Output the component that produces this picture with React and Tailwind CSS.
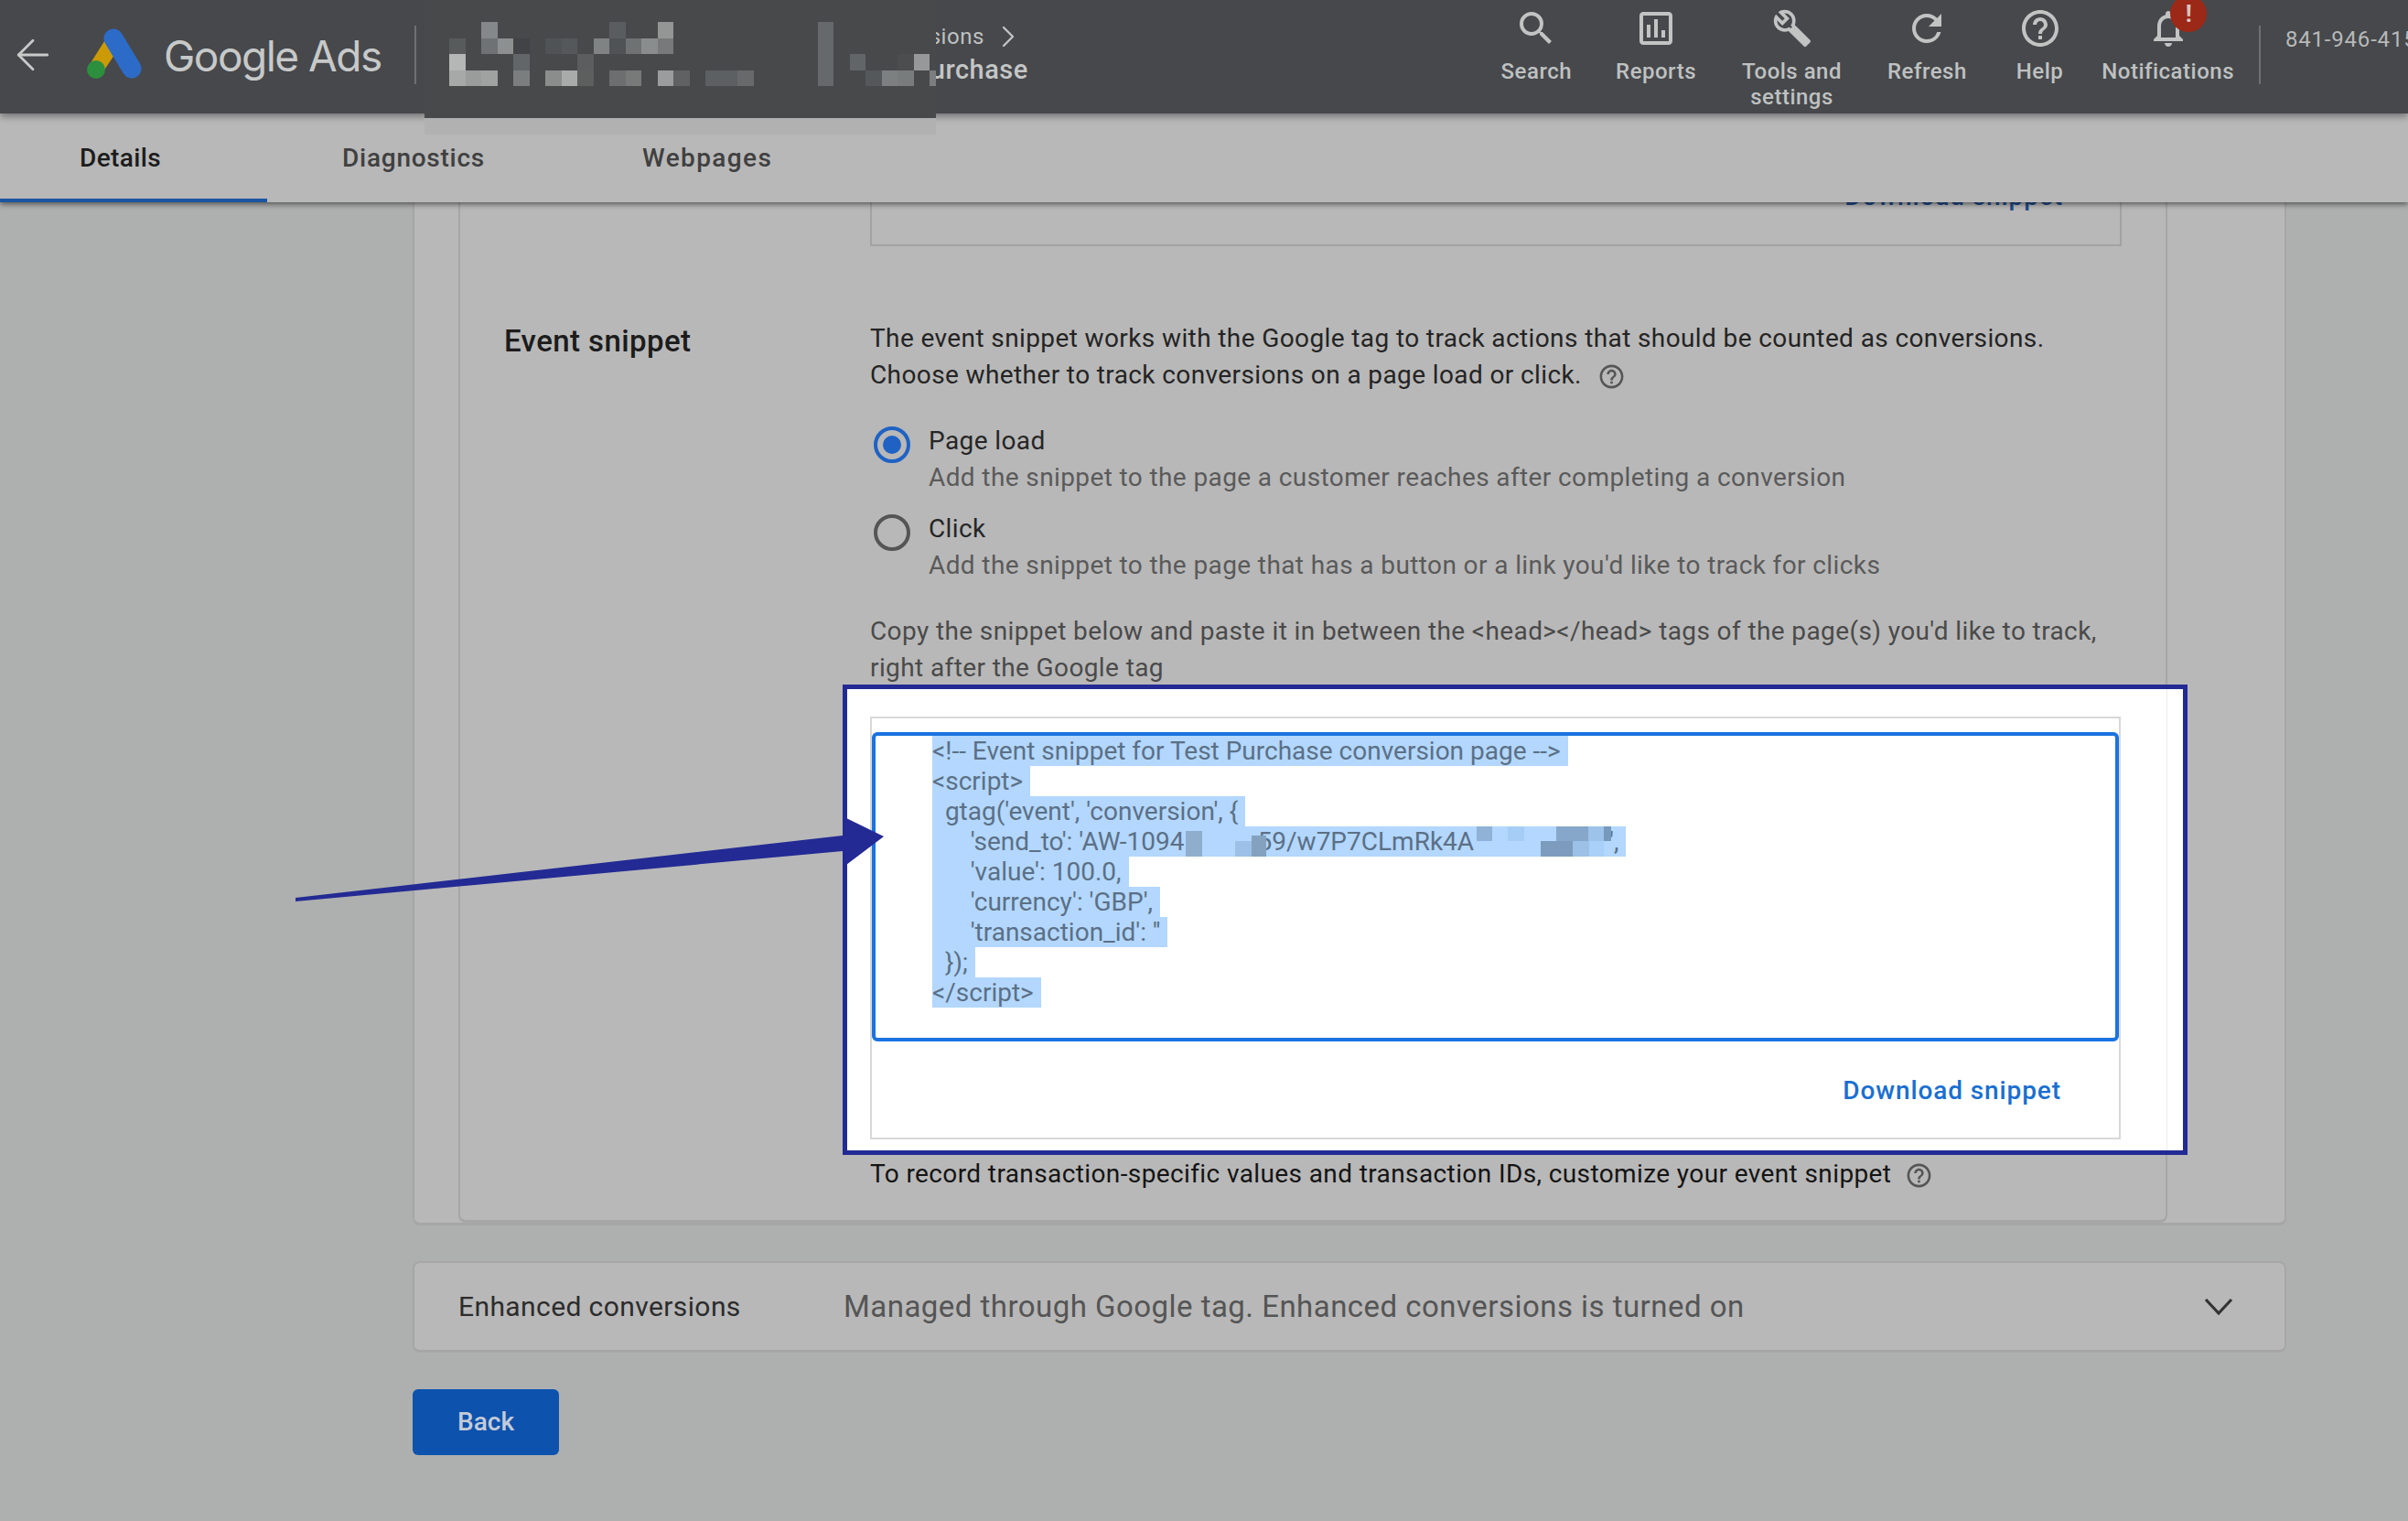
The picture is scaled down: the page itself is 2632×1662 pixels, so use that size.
import React from "react";
import { ArrowLeft, ChevronRight } from "lucide-react";
import { MdSearch, MdOutlineAssessment, MdRefresh, MdHelpOutline, MdNotificationsNone } from "react-icons/md";

const ROWS = [
  { 2: "#85888a", 10: "#5a5d5f", 13: "#939695", 23: "#65696b" },
  { 0: "#585b5c", 2: "#6f7274", 3: "#8d9090", 4: "#414346", 6: "#505355", 7: "#55585a", 9: "#808383", 10: "#505355", 11: "#6f7273", 12: "#8a8d8d", 13: "#77797a", 23: "#65696b" },
  { 0: "#b5b6b6", 4: "#636668", 8: "#5c5d5e", 23: "#65696b", 25: "#626568", 28: "#4b4d4f", 29: "#96989a" },
  { 0: "#a7a9a8", 1: "#9a9c9c", 2: "#a0a2a2", 4: "#7b7e7f", 6: "#8a8d8c", 7: "#a9abaa", 8: "#5d5f5e", 10: "#6c6e6f", 11: "#787a7a", 13: "#9a9c9d", 14: "#5f6163", 16: "#5d6062", 17: "#5d6062", 18: "#68696b", 23: "#65696b", 26: "#55585a", 27: "#7d8081", 28: "#797c7d", 30: "#7b7e7f" },
];

const CELLS = ROWS.flatMap((row, r) => Array.from({ length: 31 }, (_, c) => ({ key: r + "-" + c, color: row[c] || "transparent" })));

const SNIPPET_BLOCKS = [
  { x: 278, y: 5, w: 18, h: 28, c: "#8faecd" },
  { x: 332, y: 16, w: 18, h: 17, c: "#9cc0e6" },
  { x: 350, y: 10, w: 16, h: 23, c: "#84a2c0" },
  { x: 596, y: 0, w: 17, h: 16, c: "#8fb2d6" },
  { x: 630, y: 0, w: 18, h: 16, c: "#a6cdf5" },
  { x: 683, y: 0, w: 35, h: 16, c: "#86a7c9" },
  { x: 718, y: 0, w: 17, h: 16, c: "#9dc3ea" },
  { x: 735, y: 0, w: 8, h: 16, c: "#7799bb" },
  { x: 666, y: 16, w: 35, h: 17, c: "#7d9cbd" },
  { x: 701, y: 16, w: 18, h: 17, c: "#9cc0e6" },
  { x: 719, y: 16, w: 16, h: 17, c: "#a9d0f8" },
];

function NavItem({ icon, label, second, extra, className }) {
  return (
    <div className={"relative flex flex-col items-center pt-[5px] h-[124px] " + className}>
      <div className="h-[52px] w-[48px] flex items-center justify-center text-[#c2c4c4]">{icon}</div>
      <div className="mt-[7px] text-center text-[24px] leading-[28px] font-medium tracking-[0.5px] text-[#bfc1c1] whitespace-nowrap">
        <div>{label}</div>
        {second && <div>{second}</div>}
      </div>
      {extra}
    </div>
  );
}

function WrenchIcon() {
  return (
    <svg width="44" height="44" viewBox="0 0 24 24" fill="currentColor">
      <path d="m22.61 18.99-9.08-9.08c.93-2.34.45-5.1-1.44-7C9.79.61 6.21.4 3.66 2.26L7.5 6.11 6.08 7.52 2.25 3.69C.39 6.23.6 9.82 2.9 12.11c1.86 1.86 4.57 2.35 6.88 1.48l9.11 9.11c.39.39 1.02.39 1.41 0l2.3-2.3c.4-.38.4-1.01.01-1.41zm-3 1.6-9.46-9.46c-.61.45-1.29.72-2 .82-1.36.2-2.79-.21-3.83-1.25C3.37 9.76 2.93 8.5 3 7.26l3.09 3.09 4.24-4.24-3.09-3.09c1.24-.07 2.49.37 3.44 1.31 1.08 1.08 1.49 2.57 1.24 3.96-.12.71-.42 1.37-.88 1.96l9.45 9.45-.88.89z" />
      <path d="M11.5 11.5 20.3 20.5" stroke="currentColor" strokeWidth="3" fill="none" />
    </svg>
  );
}

function AdsLogo() {
  return (
    <svg width="62" height="58" viewBox="93 30 62 58">
      <polygon points="115,42 124,60 112,78 96,72" fill="#cc9a06" />
      <line x1="123" y1="42" x2="143" y2="75" stroke="#2c6cc8" strokeWidth="21" strokeLinecap="round" />
      <circle cx="104" cy="76" r="10" fill="#2c8f3e" />
    </svg>
  );
}

function Radio({ checked }) {
  return (
    <div className={"mt-[4px] mr-[20px] ml-[4px] w-[40px] h-[40px] rounded-full border-[4px] flex items-center justify-center shrink-0 " + (checked ? "border-[#1f62c4]" : "border-[#555]")}>
      {checked && <div className="w-[20px] h-[20px] rounded-full bg-[#1f62c4]" />}
    </div>
  );
}

function SnippetLine({ children }) {
  return (
    <div className="h-[33px] leading-[33px]">
      <span className="inline-block h-[33px] bg-[#b3d7fe] pr-[8px] whitespace-pre">{children}</span>
    </div>
  );
}

export default function App() {
  return (
    <div className="relative w-[2632px] h-[1662px] overflow-hidden bg-[#aeb0af] flex flex-col font-['Roboto',sans-serif]">
      {/* Top bar */}
      <header className="relative z-20 h-[124px] shrink-0 bg-[#46484b] flex items-start shadow-[0_3px_8px_rgba(0,0,0,0.4)]">
        <div className="ml-[9px] mt-[33px] text-[#c8caca]">
          <ArrowLeft size={54} strokeWidth={1.25} />
        </div>
        <div className="ml-[31px] mt-[30px]"><AdsLogo /></div>
        <div className="ml-[23px] mt-[30px] text-[46px] leading-[62px] text-[#c7c9c9] font-['Inter',sans-serif] tracking-[-1.5px] whitespace-nowrap">Google Ads</div>
        <div className="ml-[36px] mt-[28px] w-[2px] h-[64px] bg-[#6e7072]" />
        <div className="ml-[300px] mt-[24px] w-[369px] text-right text-[#bfc1c1] whitespace-nowrap">
          <div className="flex justify-end items-center h-[32px] text-[24px] tracking-[0.5px] pr-[2px]">
            Conversions
            <ChevronRight size={40} strokeWidth={1.4} className="ml-[6px] text-[#c2c4c4]" />
          </div>
          <div className="h-[40px] leading-[40px] text-[29px] font-medium tracking-[0.5px] text-[#c4c6c6]">Test Purchase</div>
        </div>
        <div className="ml-auto flex items-start">
          <NavItem className="px-[25px]" icon={<MdSearch size={48} />} label="Search" />
          <NavItem className="pl-[23px] pr-[25px]" icon={<MdOutlineAssessment size={48} />} label="Reports" />
          <NavItem className="px-[25px]" icon={<WrenchIcon />} label="Tools and" second="settings" />
          <NavItem className="px-[25px]" icon={<MdRefresh size={48} />} label="Refresh" />
          <NavItem className="pl-[29px] pr-[25px]" icon={<MdHelpOutline size={48} />} label="Help" />
          <NavItem
            className="pl-[17px] pr-[25px]"
            icon={<MdNotificationsNone size={48} />}
            label="Notifications"
            extra={
              <div className="absolute left-[92px] top-[-5px] w-[40px] h-[40px] rounded-full bg-[#9c2818] flex items-center justify-center text-[#d8c5c0] text-[26px] font-bold">!</div>
            }
          />
          <div className="ml-[2px] mt-[28px] w-[2px] h-[64px] bg-[#6e7072]" />
          <div className="ml-[27px] mt-[28px] w-[134px] overflow-hidden text-[24px] leading-[30px] tracking-[0.8px] text-[#b7b9b9] whitespace-nowrap">841-946-4150</div>
        </div>
      </header>

      {/* Blurred account name */}
      <div className="absolute z-30 left-[464px] top-0 w-[559px] h-[147px] overflow-hidden">
        <div className="relative h-[129px] bg-[#47494b]">
          <div className="absolute left-[27px] top-[24px] grid grid-cols-[repeat(31,17.5px)] auto-rows-[17.5px]">
            {CELLS.map((cell) => (
              <div key={cell.key} style={{ backgroundColor: cell.color }} />
            ))}
          </div>
        </div>
        <div className="h-[18px] bg-[#b1b1b1]" />
      </div>

      {/* Tabs */}
      <nav className="relative z-10 h-[97px] shrink-0 bg-[#b8b8b8] flex items-center text-[28px] font-medium tracking-[0.75px] text-[#404040] shadow-[0_2px_6px_rgba(0,0,0,0.55)]">
        <div className="w-[292px] h-full flex items-center pl-[87px] border-b-[4px] border-[#1a56a0] text-[#1c1c1c] tracking-[0.4px] pt-[4px]">Details</div>
        <div className="ml-[82px] pt-[1px]">Diagnostics</div>
        <div className="ml-[172px] pt-[1px] tracking-[1.4px]">Webpages</div>
      </nav>

      {/* Content */}
      <main className="relative flex-1 pl-[451px] pr-[133px]">
        <div className="bg-[#b8b8b8] border-x-2 border-b-[3px] border-[#a6a6a6] rounded-b-[8px] h-[1118px]">
          <div className="ml-[48px] mr-[128px] h-full bg-[#b8b8b8] border-x-2 border-b-[3px] border-[#a6a6a6] rounded-b-[8px]">
            {/* Previous snippet, scrolled under the tabs */}
            <div className="ml-[448px] mr-[48px] h-[48px] border-x-2 border-b-2 border-[#a2a2a2] flex justify-end pr-[62px]">
              <div className="-mt-[26px] leading-[40px] text-[28px] font-medium tracking-[0.9px] text-[#1d4a8a]">Download snippet</div>
            </div>

            <div className="flex mt-[81px]">
              <div className="w-[448px] shrink-0 pl-[48px] text-[33px] leading-[46px] font-medium tracking-[0.4px] text-[#1c1c1c]">Event snippet</div>
              <div className="w-[1367px] text-[28px] leading-[40px] tracking-[0.39px] text-[#242424]">
                <p>The event snippet works with the Google tag to track actions that should be counted as conversions.</p>
                <p className="flex items-center">
                  Choose whether to track conversions on a page load or click.
                  <MdHelpOutline size={31} className="ml-[17px] text-[#555] mt-[3px]" />
                </p>

                <div className="flex mt-[32px]">
                  <Radio checked />
                  <div>
                    <div className="text-[#262626]">Page load</div>
                    <div className="text-[#5a5a5a]">Add the snippet to the page a customer reaches after completing a conversion</div>
                  </div>
                </div>
                <div className="flex mt-[16px]">
                  <Radio />
                  <div>
                    <div className="text-[#262626]">Click</div>
                    <div className="text-[#5a5a5a]">Add the snippet to the page that has a button or a link you'd like to track for clicks</div>
                  </div>
                </div>

                <p className="mt-[32px] text-[#4a4a4a]">
                  Copy the snippet below and paste it in between the &lt;head&gt;&lt;/head&gt; tags of the page(s) you'd like to track,
                  <br />
                  right after the Google tag
                </p>

                {/* Highlighted snippet */}
                <div className="relative -mt-[2px] -ml-[30px] -mr-[73px] bg-white border-[5px] border-[#232a94] pl-[25px] pr-[68px] pt-[30px] pb-[12px]">
                  <div className="absolute right-[17px] top-0 bottom-0 w-[1px] bg-[#ececec]" />
                  <div className="h-[462px] border-2 border-[#d8d8d8] pt-[15px]">
                    <div className="relative h-[338px] border-[4px] border-[#1a73e0] rounded-[6px] bg-white pl-[62px] text-[28px] tracking-normal text-[#5b7086]">
                      <SnippetLine>{"<!-- Event snippet for Test Purchase conversion page -->"}</SnippetLine>
                      <SnippetLine>{"<script>"}</SnippetLine>
                      <SnippetLine>{"  gtag('event', 'conversion', {"}</SnippetLine>
                      <SnippetLine>
                        {"      'send_to': 'AW-1094"}
                        <span className="inline-block w-[80px]" />
                        {"59/w7P7CLmRk4A"}
                        <span className="inline-block w-[148px]" />
                        {"',"}
                      </SnippetLine>
                      <SnippetLine>{"      'value': 100.0,"}</SnippetLine>
                      <SnippetLine>{"      'currency': 'GBP',"}</SnippetLine>
                      <SnippetLine>{"      'transaction_id': ''"}</SnippetLine>
                      <SnippetLine>{"  });"}</SnippetLine>
                      <SnippetLine>{"</script>"}</SnippetLine>
                      <div className="absolute left-[61px] top-[99px] h-[33px]">
                        {SNIPPET_BLOCKS.map((b, i) => (
                          <div key={i} className="absolute" style={{ left: b.x, top: b.y, width: b.w, height: b.h, backgroundColor: b.c }} />
                        ))}
                      </div>
                    </div>
                    <div className="mt-[34px] pr-[63px] flex justify-end leading-[40px] font-medium tracking-[0.9px] text-[#1a6fd0]">Download snippet</div>
                  </div>
                </div>

                <p className="mt-[1px] flex items-center text-[#141414]">
                  To record transaction-specific values and transaction IDs, customize your event snippet
                  <MdHelpOutline size={31} className="ml-[15px] text-[#555] mt-[3px]" />
                </p>
              </div>
            </div>
          </div>
        </div>

        {/* Enhanced conversions */}
        <div className="mt-[39px] h-[100px] flex items-center bg-[#b8b8b8] border-2 border-[#a6a6a6] border-b-[3px] rounded-[8px] pl-[48px] pr-[56px] text-[#2c2c2c]">
          <div className="w-[421px] shrink-0 text-[30px] tracking-[0.4px]">Enhanced conversions</div>
          <div className="text-[33px] tracking-[0.47px] text-[#555]">Managed through Google tag. Enhanced conversions is turned on</div>
          <svg className="ml-auto text-[#333]" width="32" height="20" viewBox="0 0 32 20" fill="none" stroke="currentColor" strokeWidth="3.2">
            <polyline points="2,2 16,17 30,2" />
          </svg>
        </div>

        <button className="mt-[40px] block w-[160px] h-[72px] rounded-[6px] bg-[#0d52ad] text-[28px] font-medium text-[#c4cbd8]">Back</button>
      </main>

      {/* Annotation arrow */}
      <svg className="absolute left-[0px] top-[0px] z-40 pointer-events-none" width="2632" height="1662" viewBox="0 0 2632 1662">
        <polygon points="323,981 921,913 921,892 966,914 925,945 921,930 323,985" fill="#232a94" />
      </svg>
    </div>
  );
}
